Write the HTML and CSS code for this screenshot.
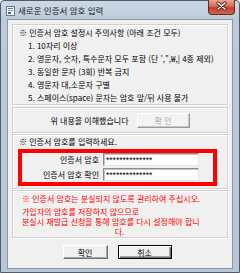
FILE: index.html
```html
<!DOCTYPE html>
<html lang="ko">
<head>
    <meta charset="UTF-8">
    <title>새로운 인증서 암호 입력</title>
    <link rel="stylesheet" href="styles.css">
</head>
<body>
    <div class="window">
        <div class="titlebar">
            <svg class="app-icon" width="9" height="10" viewBox="0 0 9 10">
                <rect x="0.5" y="0.5" width="8" height="9" fill="#f4f6f8" stroke="#6d7a88"/>
                <rect x="2" y="2" width="5" height="1" fill="#4a78b4"/>
                <rect x="2" y="4" width="5" height="1" fill="#8aa2c0"/>
                <rect x="2" y="6" width="3" height="2" fill="#3c6aa8"/>
            </svg>
            <span class="title">새로운 인증서 암호 입력</span>
            <div class="close">
                <svg width="27" height="15" viewBox="0 0 27 15">
                    <path d="M10 4 L17 10 M17 4 L10 10" stroke="#5a1a12" stroke-width="3.2" stroke-linecap="round"/>
                    <path d="M10 4 L17 10 M17 4 L10 10" stroke="#ffffff" stroke-width="1.6" stroke-linecap="round"/>
                </svg>
            </div>
        </div>

        <div class="client">
            <!-- 주의사항 -->
            <div class="group notice">
                <div class="heading">※ 인증서 암호 설정시 주의사항 (아래 조건 모두)</div>
                <ul class="rules">
                    <li>1. 10자리 이상</li>
                    <li>2. 영문자, 숫자, 특수문자 모두 포함 (단 ',",₩,|  4종 제외)</li>
                    <li>3. 동일한 문자 (3회) 반복 금지</li>
                    <li>4. 영문자 대,소문자 구별</li>
                    <li>5. 스페이스(space) 문자는 암호 앞/뒤 사용 불가</li>
                </ul>
            </div>

            <div class="group agree">
                <span>위 내용을 이해했습니다</span>
                <button class="btn btn-confirm" disabled>확 인</button>
            </div>

            <!-- 암호 입력 -->
            <div class="group entry">
                <div class="heading">※ 인증서 암호를 입력하세요.</div>
                <div class="highlight">
                    <label for="pw">인증서 암호</label>
                    <input id="pw" class="field" type="text" value="**************" readonly>
                    <label for="pw2">인증서 암호 확인</label>
                    <input id="pw2" class="field" type="text" value="**************" readonly>
                </div>
            </div>

            <div class="group warning">
                <div class="warn-line">※ 인증서 암호는 분실되지 않도록 관리하여 주십시오.</div>
                <div class="warn-text">
                    <div>가입자의 암호를 저장하지 않으므로</div>
                    <div>분실시 재발급 신청을 통해 암호를 다시 설정해야 합니</div>
                    <div class="center">다.</div>
                </div>
            </div>

            <div class="actions">
                <button class="btn btn-ok">확인</button>
                <button class="btn btn-cancel">취소</button>
            </div>
        </div>
    </div>
</body>
</html>
```

FILE: styles.css
```css
body {
    margin: 0;
    font-family: "Noto Sans CJK KR", "Noto Sans", sans-serif;
    font-size: 8px;
    color: #000;
    background-color: #fff;
}

.window {
    width: 240px;
    height: 273px;
    box-sizing: border-box;
    border: 1px solid #505c69;
    border-radius: 4px 4px 0 0;
    background: linear-gradient(#ccd8e5, #bccad9 20px, #b8c6d5);
    display: flex;
    flex-direction: column;
}

.titlebar {
    height: 18px;
    display: flex;
    align-items: center;
    padding-left: 5px;
}

.app-icon {
    margin-top: 1px;
}

.title {
    margin-left: 3px;
    font-size: 8.5px;
    color: #1a1a1a;
}

.close {
    margin-left: auto;
    margin-right: 4px;
    margin-top: -1px;
    align-self: flex-start;
    width: 27px;
    height: 15px;
    box-sizing: border-box;
    border: 1px solid #6b2a21;
    border-top: none;
    border-radius: 0 0 4px 4px;
    background: linear-gradient(#e9a698, #d56a55 45%, #c2402a 55%, #d0664c);
}

.close svg {
    display: block;
    margin: -1px 0 0 -1px;
}

.client {
    flex: 1;
    margin: 0 6px 3px;
    border: 1px solid #8a97a6;
    background-color: #f0f0f0;
    padding: 4px 4px 0;
    display: flex;
    flex-direction: column;
}

.group {
    box-sizing: border-box;
    border: 1px solid #d0d0d0;
    box-shadow: inset 1px 1px #fff, 1px 1px #fff;
}

.notice {
    height: 81px;
    padding: 1px 0 0 6px;
    line-height: 13px;
}

.rules {
    list-style: none;
    margin: 0;
    padding-left: 9px;
}

.agree {
    margin-top: 2px;
    height: 26px;
    display: flex;
    align-items: center;
    justify-content: center;
    gap: 8px;
}

.btn {
    font-family: inherit;
    font-size: 8px;
    padding: 0;
    box-sizing: border-box;
    background-color: #f0f0f0;
    border: 1px solid;
    border-color: #fff #6f6f6f #6f6f6f #fff;
    box-shadow: inset -1px -1px #a8a8a8;
    color: #000;
    cursor: pointer;
}

.btn-confirm {
    width: 53px;
    height: 15px;
    margin-top: 1px;
    color: #a6a6a6;
    background-color: #f3f3f3;
    border-color: #fff #9a9a9a #9a9a9a #fff;
    box-shadow: inset -1px -1px #c8c8c8;
}

.entry {
    margin-top: 1px;
    height: 55px;
    padding: 2px 0 0 6px;
}

.entry .heading {
    line-height: 10px;
}

.highlight {
    margin: 2px 0 0 -1px;
    width: 199px;
    height: 37px;
    box-sizing: border-box;
    border: 4px solid #ff0000;
    padding: 0 14px 1px 0;
    display: grid;
    grid-template-columns: 1fr 96px;
    column-gap: 4px;
    row-gap: 2px;
}

.highlight label {
    text-align: right;
    line-height: 13px;
}

.field {
    height: 13px;
    width: 96px;
    box-sizing: border-box;
    margin: 0;
    padding: 0 0 0 2px;
    border: 1px solid;
    border-color: #8c8c8c #e4e4e4 #e4e4e4 #8c8c8c;
    box-shadow: inset 1px 1px #c4c4c4;
    background-color: #fff;
    font-family: "Liberation Sans", Arial, sans-serif;
    font-size: 8.5px;
    line-height: 11px;
    color: #000;
    outline: none;
}

.warning {
    margin-top: 1px;
    height: 48px;
    padding: 3px 10px 0 9px;
    color: #ff0000;
}

.warn-line {
    line-height: 10px;
}

.warn-text {
    margin-top: 3px;
    line-height: 10px;
}

.warn-text .center {
    text-align: center;
}

.actions {
    margin-top: 7px;
    height: 14px;
    display: flex;
    justify-content: center;
    gap: 10px;
    padding-right: 6px;
}

.btn-ok {
    width: 45px;
    height: 14px;
}

.btn-cancel {
    width: 54px;
    height: 14px;
    border: 1px solid #000;
    box-shadow: inset 1px 1px #fff, inset -1px -1px #6f6f6f, inset -2px -2px #a8a8a8;
}
```
